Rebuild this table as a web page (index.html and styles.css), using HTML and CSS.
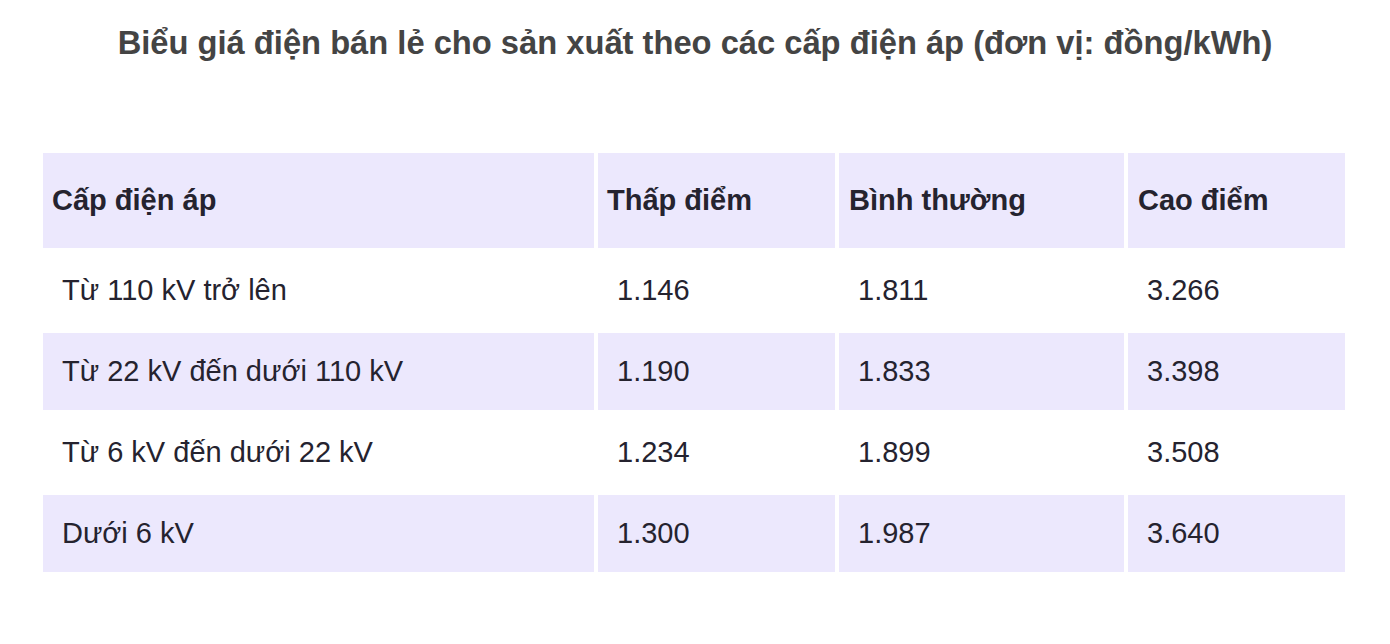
FILE: index.html
```html
<!DOCTYPE html>
<html lang="vi">
<head>
<meta charset="utf-8">
<title>Biểu giá điện</title>
<link rel="stylesheet" href="styles.css">
</head>
<body>
<div class="page">
  <h1 class="title">Biểu giá điện bán lẻ cho sản xuất theo các cấp điện áp (đơn vị: đồng/kWh)</h1>
  <table class="prices">
    <thead>
      <tr>
        <th class="c1">Cấp điện áp</th>
        <th class="c2">Thấp điểm</th>
        <th class="c3">Bình thường</th>
        <th class="c4">Cao điểm</th>
      </tr>
    </thead>
    <tbody>
      <tr>
        <td>Từ 110 kV trở lên</td>
        <td>1.146</td>
        <td>1.811</td>
        <td>3.266</td>
      </tr>
      <tr class="alt">
        <td>Từ 22 kV đến dưới 110 kV</td>
        <td>1.190</td>
        <td>1.833</td>
        <td>3.398</td>
      </tr>
      <tr>
        <td>Từ 6 kV đến dưới 22 kV</td>
        <td>1.234</td>
        <td>1.899</td>
        <td>3.508</td>
      </tr>
      <tr class="alt">
        <td>Dưới 6 kV</td>
        <td>1.300</td>
        <td>1.987</td>
        <td>3.640</td>
      </tr>
    </tbody>
  </table>
</div>
</body>
</html>
```

FILE: styles.css
```css
html, body {
  margin: 0;
  padding: 0;
  background: #ffffff;
}
.page {
  width: 1390px;
  height: 644px;
  padding-top: 22px;
  box-sizing: border-box;
  font-family: "Liberation Sans", Arial, sans-serif;
}
.title {
  margin: 0;
  text-align: center;
  font-size: 32.7px;
  line-height: 42px;
  font-weight: bold;
  color: #444444;
}
.prices {
  margin: 85px 0 0 39px;
  border-collapse: separate;
  border-spacing: 4px;
  width: 1310px;
  table-layout: fixed;
  color: #25232f;
}
.prices th {
  background: #ece8fd;
  height: 95px;
  padding: 0 0 0 9px;
  text-align: left;
  font-size: 29px;
  font-weight: bold;
  box-sizing: border-box;
}
.prices th.c1 { width: 551px; }
.prices th.c2 { width: 237px; }
.prices th.c3 { width: 285px; padding-left: 10px; }
.prices th.c4 { width: 217px; padding-left: 10px; }
.prices td {
  height: 77px;
  padding: 0 0 0 19px;
  font-size: 29px;
  box-sizing: border-box;
  background: #ffffff;
}
.prices tr.alt td {
  background: #ece8fd;
}
```
